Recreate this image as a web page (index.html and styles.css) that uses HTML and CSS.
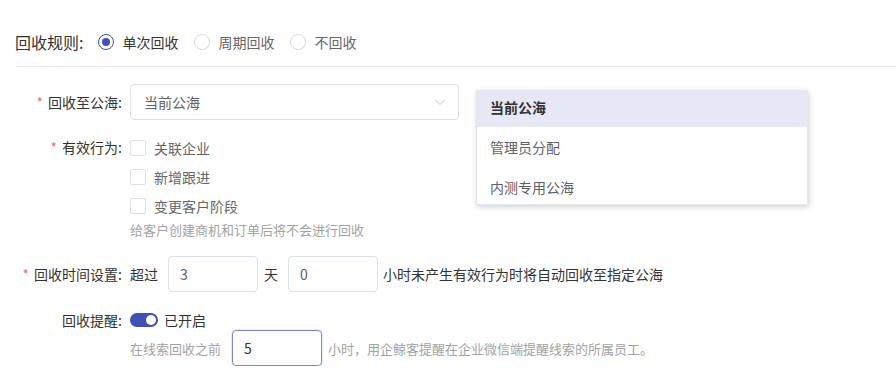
FILE: index.html
```html
<!DOCTYPE html>
<html lang="zh-CN">
<head>
    <meta charset="UTF-8">
    <meta name="viewport" content="width=device-width, initial-scale=1.0">
    <title>回收规则</title>
    <link rel="stylesheet" href="styles.css">
</head>
<body>
    <!-- 回收规则 -->
    <div class="rule-head">
        <span class="rule-title">回收规则:</span>
        <label class="radio checked"><span class="radio-dot"></span><span class="radio-text">单次回收</span></label>
        <label class="radio"><span class="radio-dot"></span><span class="radio-text">周期回收</span></label>
        <label class="radio"><span class="radio-dot"></span><span class="radio-text">不回收</span></label>
    </div>
    <div class="divider"></div>

    <div class="form">
        <!-- 回收至公海 -->
        <div class="form-item item-sea">
            <div class="label"><span class="star">*</span>回收至公海:</div>
            <div class="field">
                <div class="select">
                    <span>当前公海</span>
                    <svg class="arrow" width="12" height="8" viewBox="0 0 12 8"><path d="M1 1.5 L6 6.5 L11 1.5" fill="none" stroke="#c0c4cc" stroke-width="1"/></svg>
                </div>
            </div>
            <div class="dropdown">
                <ul class="dropdown-list">
                    <li class="active">当前公海</li>
                    <li>管理员分配</li>
                    <li>内测专用公海</li>
                </ul>
            </div>
        </div>

        <!-- 有效行为 -->
        <div class="form-item item-action">
            <div class="label"><span class="star">*</span>有效行为:</div>
            <div class="field">
                <label class="checkbox"><span class="box"></span>关联企业</label>
                <label class="checkbox"><span class="box"></span>新增跟进</label>
                <label class="checkbox"><span class="box"></span>变更客户阶段</label>
                <p class="hint">给客户创建商机和订单后将不会进行回收</p>
            </div>
        </div>

        <!-- 回收时间设置 -->
        <div class="form-item item-time">
            <div class="label"><span class="star">*</span>回收时间设置:</div>
            <div class="field inline">
                <span class="word">超过</span>
                <input class="input" type="text" value="3">
                <span class="word day">天</span>
                <input class="input" type="text" value="0">
                <span class="word tail">小时未产生有效行为时将自动回收至指定公海</span>
            </div>
        </div>

        <!-- 回收提醒 -->
        <div class="form-item item-remind">
            <div class="label">回收提醒:</div>
            <div class="field inline">
                <span class="switch"><span class="knob"></span></span>
                <span class="switch-text">已开启</span>
            </div>
        </div>
        <div class="form-item item-before">
            <div class="label"></div>
            <div class="field inline">
                <span class="muted">在线索回收之前</span>
                <input class="input focus" type="text" value="5">
                <span class="muted tail-muted">小时，用企鲸客提醒在企业微信端提醒线索的所属员工。</span>
            </div>
        </div>
    </div>
</body>
</html>
```

FILE: styles.css
```css
* {
    box-sizing: border-box;
}

body {
    margin: 0;
    font-family: "Noto Sans CJK SC", "Noto Sans", sans-serif;
    font-size: 14px;
    color: #333;
    background: #fff;
}

/* 顶部回收规则 */
.rule-head {
    display: flex;
    align-items: center;
    height: 40px;
    margin-top: 22px;
    padding-left: 15px;
}

.rule-title {
    font-size: 16px;
    color: #333;
    margin-right: 15px;
}

.radio {
    display: flex;
    align-items: center;
    margin-right: 16px;
    color: #666;
}

.radio-dot {
    width: 16px;
    height: 16px;
    border: 1px solid #d9d9d9;
    border-radius: 50%;
    margin-right: 8px;
    position: relative;
}

.radio.checked .radio-dot {
    border-color: #3f51b5;
}

.radio.checked .radio-dot::after {
    content: "";
    position: absolute;
    left: 3px;
    top: 3px;
    width: 8px;
    height: 8px;
    border-radius: 50%;
    background: #3f51b5;
}

.radio.checked .radio-text {
    color: #333;
}

.divider {
    height: 1px;
    margin: 4px 0 0 15px;
    background: #ebedf0;
}

/* 表单 */
.form-item {
    display: flex;
    position: relative;
}

.label {
    width: 122px;
    flex-shrink: 0;
    text-align: right;
    color: #333;
    line-height: 36px;
}

.star {
    color: #f56c6c;
    margin-right: 5px;
}

.field {
    margin-left: 8px;
}

.field.inline {
    display: flex;
    align-items: center;
}

.item-sea {
    margin-top: 17px;
}

.select {
    width: 329px;
    height: 36px;
    border: 1px solid #dcdfe6;
    border-radius: 4px;
    display: flex;
    align-items: center;
    justify-content: space-between;
    padding: 0 12px 0 13px;
    color: #606266;
}

/* 下拉浮层 */
.dropdown {
    position: absolute;
    left: 476px;
    top: 6px;
    width: 332px;
    height: 115px;
    overflow: hidden;
    background: #fff;
    border: 1px solid #e4e7ed;
    box-shadow: 1px 2px 6px rgba(0, 0, 0, 0.18);
    z-index: 2;
}

.dropdown-list {
    list-style: none;
    margin: -4px 0 0 0;
    padding: 0;
}

.dropdown-list li {
    height: 40px;
    line-height: 40px;
    padding-left: 13px;
    color: #606266;
}

.dropdown-list li.active {
    background: #e6e9f5;
    color: #333;
    font-weight: bold;
}

/* 有效行为 */
.item-action {
    margin-top: 13px;
}

.item-action .label {
    line-height: 29px;
}

.checkbox {
    display: flex;
    align-items: center;
    height: 29px;
    color: #666;
}

.box {
    width: 16px;
    height: 16px;
    border: 1px solid #dcdfe6;
    border-radius: 2px;
    margin-right: 8px;
}

.hint {
    margin: 0;
    line-height: 20px;
    font-size: 13px;
    color: #a3a3a3;
}

/* 回收时间 */
.item-time {
    margin-top: 16px;
}

.input {
    width: 90px;
    height: 36px;
    border: 1px solid #dcdfe6;
    border-radius: 4px;
    padding: 0 11px;
    font-family: inherit;
    font-size: 14px;
    color: #5a5e73;
    outline: none;
}

.input.focus {
    border-color: #7e88d2;
    box-shadow: 0 0 0 1px rgba(63, 81, 181, 0.12);
    color: #333;
}

.word {
    color: #333;
    margin-right: 10px;
}

.word.day {
    margin-left: 6px;
}

.word.tail {
    margin-left: 5px;
    margin-right: 0;
}

/* 回收提醒 */
.item-remind {
    margin-top: 18px;
}

.item-remind .label {
    line-height: 20px;
}

.switch {
    width: 28px;
    height: 14px;
    border-radius: 7px;
    background: #3f51b5;
    position: relative;
    margin-right: 6px;
}

.knob {
    position: absolute;
    right: 2px;
    top: 2px;
    width: 10px;
    height: 10px;
    border-radius: 50%;
    background: #fff;
}

.switch-text {
    color: #333;
    line-height: 20px;
}

.muted {
    font-size: 13px;
    color: #a3a3a3;
    margin-right: 11px;
}

.muted.tail-muted {
    margin-left: 6px;
    margin-right: 0;
}
```
